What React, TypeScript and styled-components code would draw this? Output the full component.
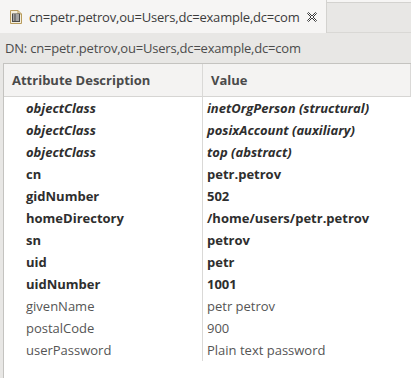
import React from "react";
import styled, { createGlobalStyle } from "styled-components";

const Global = createGlobalStyle`
  html, body { margin: 0; padding: 0; background: #e8e7e5; }
  body { font-family: "Open Sans", "Noto Sans", sans-serif; }
`;

const Page = styled.div`
  width: 411px;
  height: 378px;
  display: flex;
  flex-direction: column;
  background: #e8e7e5;
  overflow: hidden;
`;

const TabBar = styled.div`
  height: 33px;
  display: flex;
  border-top: 2px solid #f6f5f4;
  box-sizing: border-box;
  background: #e8e7e5;
`;

const TabFill = styled.div`
  flex: 1;
  border-top: 1px solid #d3d2cf;
  border-bottom: 1px solid #d9d8d5;
`;

const Tab = styled.div`
  width: 327px;
  margin-top: -2px;
  background: #f6f5f4;
  border-right: 1px solid #d3d2cf;
  display: flex;
  align-items: center;
  gap: 7px;
  padding-left: 10px;
  box-sizing: border-box;
`;

const TabTitle = styled.span`
  font-size: 13px;
  color: #3c3c3c;
  letter-spacing: -0.2px;
`;

const DnBar = styled.div`
  height: 30px;
  display: flex;
  align-items: center;
  padding-left: 5px;
  font-size: 13px;
  color: #4c4c4c;
  letter-spacing: -0.2px;
`;

const TableBox = styled.div`
  flex: 1;
  margin-left: 3px;
  background: #ffffff;
  border-top: 1px solid #c4c3c0;
  border-left: 1px solid #c4c3c0;
  display: flex;
  flex-direction: column;
`;

const Grid = styled.div`
  display: grid;
  grid-template-columns: 199px 1fr;
`;

const HeadCell = styled.div`
  height: 32px;
  display: flex;
  align-items: center;
  padding-left: 8px;
  background: #f4f3f2;
  border-bottom: 1px solid #d6d5d3;
  border-right: 1px solid #dad9d7;
  font-size: 13px;
  font-weight: 700;
  color: #4a4a4a;
`;

const Cell = styled.div<{ $bold?: boolean; $italic?: boolean; $first?: boolean }>`
  height: 22px;
  display: flex;
  align-items: center;
  padding-left: ${(p) => (p.$first ? "22px" : "4px")};
  border-right: ${(p) => (p.$first ? "1px solid #dad9d7" : "none")};
  font-size: 13px;
  font-weight: ${(p) => (p.$bold ? 700 : 400)};
  font-style: ${(p) => (p.$italic ? "italic" : "normal")};
  color: ${(p) => (p.$bold ? "#2e2e2e" : "#555555")};
  white-space: nowrap;
`;

type Row = { name: string; value: string; bold?: boolean; italic?: boolean };

const rows: Row[] = [
  { name: "objectClass", value: "inetOrgPerson (structural)", bold: true, italic: true },
  { name: "objectClass", value: "posixAccount (auxiliary)", bold: true, italic: true },
  { name: "objectClass", value: "top (abstract)", bold: true, italic: true },
  { name: "cn", value: "petr.petrov", bold: true },
  { name: "gidNumber", value: "502", bold: true },
  { name: "homeDirectory", value: "/home/users/petr.petrov", bold: true },
  { name: "sn", value: "petrov", bold: true },
  { name: "uid", value: "petr", bold: true },
  { name: "uidNumber", value: "1001", bold: true },
  { name: "givenName", value: "petr petrov" },
  { name: "postalCode", value: "900" },
  { name: "userPassword", value: "Plain text password" },
];

const EntryIcon = () => (
  <svg width="12" height="14" viewBox="0 0 12 14">
    <path d="M0.5 0.5 H8 L11.5 4 V13.5 H0.5 Z" fill="#f4eedc" stroke="#b89b5c" />
    <path d="M8 0.5 V4 H11.5" fill="none" stroke="#b89b5c" />
    <rect x="2.5" y="4" width="7" height="7.5" fill="#fff" stroke="#4a4a4a" strokeWidth="1" />
    <path d="M2.5 6 H9.5 M2.5 8 H9.5 M2.5 10 H9.5 M5 4 V11.5" stroke="#4a4a4a" strokeWidth="1" />
  </svg>
);

const CloseIcon = () => (
  <svg width="10" height="10" viewBox="0 0 10 10">
    <path
      d="M0.5 1.5 L1.5 0.5 L5 4 L8.5 0.5 L9.5 1.5 L6 5 L9.5 8.5 L8.5 9.5 L5 6 L1.5 9.5 L0.5 8.5 L4 5 Z"
      fill="#fff"
      stroke="#3a3a3a"
      strokeWidth="1"
    />
  </svg>
);

export default function App() {
  return (
    <Page>
      <Global />
      <TabBar>
        <Tab>
          <EntryIcon />
          <TabTitle>cn=petr.petrov,ou=Users,dc=example,dc=com</TabTitle>
          <CloseIcon />
        </Tab>
        <TabFill />
      </TabBar>
      <DnBar>DN: cn=petr.petrov,ou=Users,dc=example,dc=com</DnBar>
      <TableBox>
        <Grid>
          <HeadCell>Attribute Description</HeadCell>
          <HeadCell>Value</HeadCell>
          {rows.map((r, i) => (
            <React.Fragment key={i}>
              <Cell $first $bold={r.bold} $italic={r.italic}>
                {r.name}
              </Cell>
              <Cell $bold={r.bold} $italic={r.italic}>
                {r.value}
              </Cell>
            </React.Fragment>
          ))}
        </Grid>
      </TableBox>
    </Page>
  );
}
